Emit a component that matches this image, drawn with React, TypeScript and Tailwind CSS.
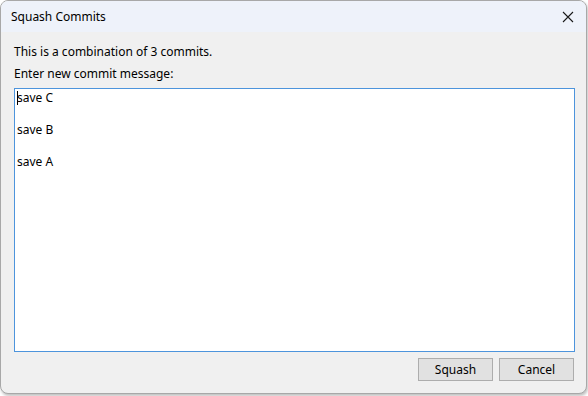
export default function App() {
    return (
        <div className="w-[588px] h-[396px] bg-white" style={{ fontFamily: '"Noto Sans", "Open Sans", sans-serif' }}>
            <div className="w-[587px] h-[394px] flex flex-col rounded-lg border border-[#a8a8a8] bg-[#f0f0f0] overflow-hidden shadow-[1px_2px_3px_rgba(0,0,0,0.25)]">
                {/* Title bar */}
                <div className="h-[31px] shrink-0 flex items-center justify-between bg-[#eef2fa] pl-[10px] pr-[12px]">
                    <span className="text-[12px] text-black">Squash Commits</span>
                    <svg width="12" height="12" viewBox="0 0 12 12" className="text-[#1a1a1a]">
                        <path d="M1 1 L11 11 M11 1 L1 11" stroke="currentColor" strokeWidth="1.1" />
                    </svg>
                </div>

                {/* Body */}
                <div className="flex-1 flex flex-col pl-[13px] pr-[11px] pt-[11px] pb-[12px] text-[12px] text-black">
                    <div className="leading-[18px]">This is a combination of 3 commits.</div>
                    <div className="leading-[18px] mt-[4px]">Enter new commit message:</div>
                    <div className="mt-[5px] flex-1 bg-white border border-[#4d94dc] px-[2px] pt-[1px] leading-[16px] relative">
                        <span className="absolute left-[2px] top-[2px] w-px h-[14px] bg-black" />
                        <div>save C</div>
                        <div>&nbsp;</div>
                        <div>save B</div>
                        <div>&nbsp;</div>
                        <div>save A</div>
                    </div>
                    <div className="flex justify-end gap-[6px] mt-[6px] mr-[1px]">
                        <button className="w-[75px] h-[23px] bg-[#e1e1e1] border border-[#adadad] text-[12px] text-black">Squash</button>
                        <button className="w-[75px] h-[23px] bg-[#e1e1e1] border border-[#adadad] text-[12px] text-black">Cancel</button>
                    </div>
                </div>
            </div>
        </div>
    );
}
